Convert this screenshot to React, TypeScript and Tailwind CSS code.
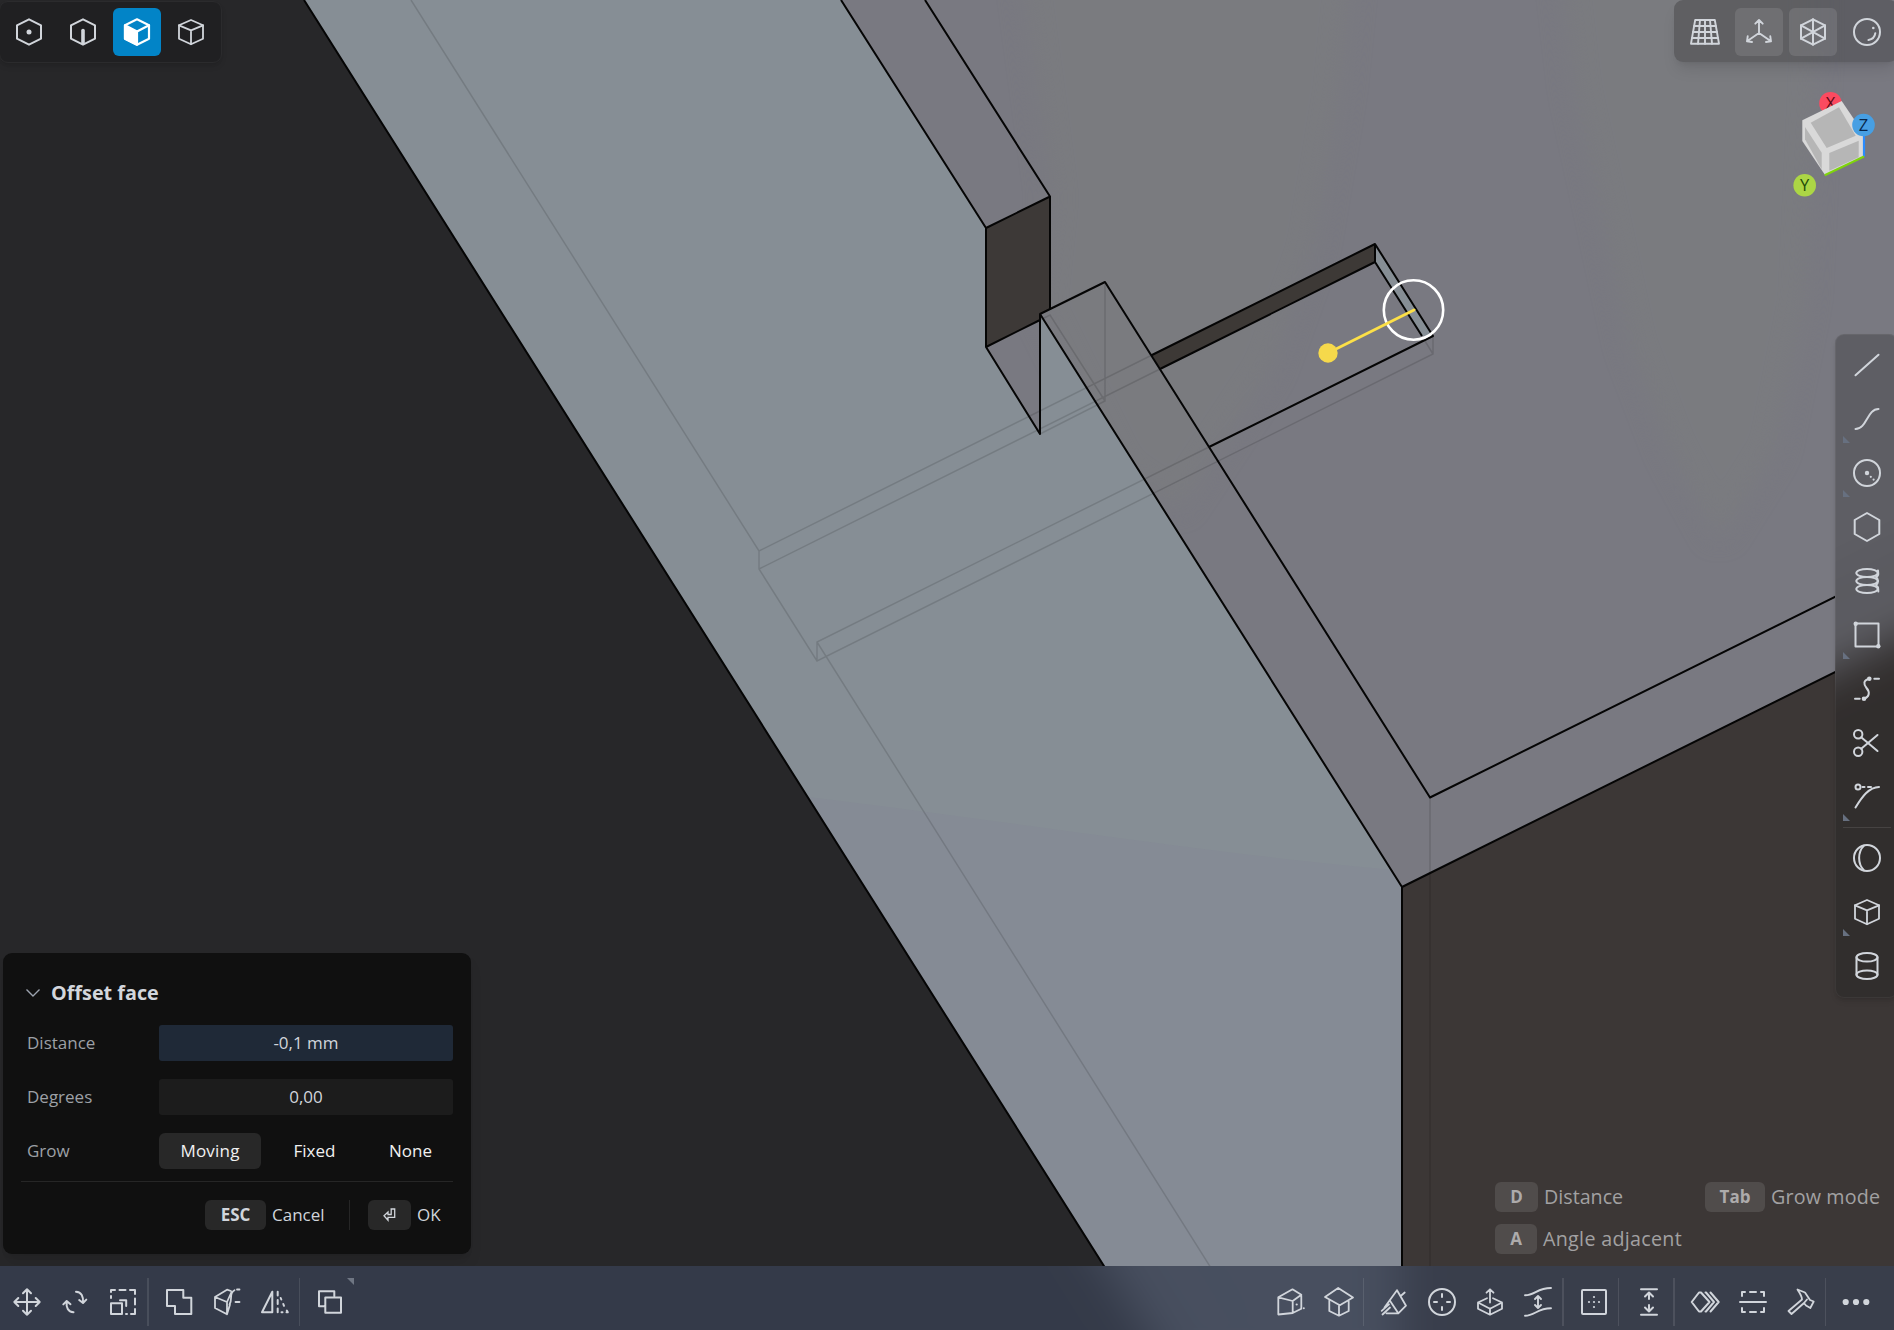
import React from "react";

type IconProps = { children: React.ReactNode; w?: number };

/* 32px glyph with its origin in the middle */
function Icon({ children, w = 2 }: IconProps) {
  return (
    <svg
      width="32"
      height="32"
      viewBox="-16 -16 32 32"
      fill="none"
      stroke="currentColor"
      strokeWidth={w}
      strokeLinecap="round"
      strokeLinejoin="round"
      className="shrink-0"
    >
      {children}
    </svg>
  );
}

const HEX = "M0 -12.7L12 -6.7V6.7L0 12.7L-12 6.7V-6.7Z";

const dot = (cx: number, cy: number, r: number) => (
  <circle key={`${cx},${cy}`} cx={cx} cy={cy} r={r} fill="currentColor" stroke="none" />
);

const icons = {
  point: (
    <Icon>
      <path d={HEX} />
      {dot(0, 0, 2.5)}
    </Icon>
  ),
  edge: (
    <Icon>
      <path d={HEX} />
      <path d="M0 -1.5V11" strokeWidth="3.6" />
    </Icon>
  ),
  face: (
    <Icon w={2.2}>
      <path d={HEX} />
      <path d="M-12 -6.7L0 -0.5V12.7L-12 6.7Z" fill="currentColor" />
      <path d="M0 -0.5L12 -6.7" />
    </Icon>
  ),
  solid: (
    <Icon w={1.8}>
      <path d="M0 -12L12 -6.7V6.7L0 12.3L-12 6.7V-6.7Z" />
      <path d="M-12 -6.7L0 -1.7L12 -6.7M0 -1.7V12" />
    </Icon>
  ),
  grid: (
    <Icon w={1.9}>
      <path d="M-9.8 -12H9.8L14 11.7H-14Z" />
      <path d="M-10.8 -6H10.8M-12 0H12M-13 6H13M-5 -12L-7 11.7M0 -12V11.7M5 -12L7 11.7" />
    </Icon>
  ),
  axes: (
    <Icon w={1.9}>
      <path d="M0 1V-12M-3.7 -8.3L0 -12L3.7 -8.3M0 1L-12 9.3M-11.3 4.3L-12 9.3L-7 10M0 1L12 9.3M11.3 4.3L12 9.3L7 10" />
    </Icon>
  ),
  wire: (
    <Icon>
      <path d={HEX} />
      <path d="M0 -12.7V12.7M-12 -6.7L12 6.7M12 -6.7L-12 6.7" />
    </Icon>
  ),
  shaded: (
    <Icon>
      <circle r="13" />
      <path d="M1.5 8C5 7.5 7.8 5 8.3 1.2" />
      {dot(6.3, -4, 1.3)}
    </Icon>
  ),
  line: (
    <Icon>
      <path d="M-11.5 10.3L11.5 -10.3" />
    </Icon>
  ),
  curve: (
    <Icon>
      <path d="M-11.5 10C0 10 0 -10 11.5 -10" />
    </Icon>
  ),
  circle: (
    <Icon>
      <circle r="13" />
      {dot(0, 0, 2.2)}
      {dot(3.8, 3.8, 1.1)}
      {dot(6.6, 6.6, 1.1)}
    </Icon>
  ),
  polygon: (
    <Icon>
      <path d="M0 -14L12.3 -7V7L0 14L-12.3 7V-7Z" />
    </Icon>
  ),
  spiral: (
    <Icon>
      <ellipse cy="-8" rx="10.7" ry="4" />
      <ellipse cy="0" rx="10.7" ry="4" />
      <ellipse cy="8" rx="10.7" ry="4" />
      <path d="M11 -10.5C11.5 -6 11.5 -5 9 -4C12 -2 11.5 2 9 4C12 6 11 8 11.3 10.5" />
    </Icon>
  ),
  rect: (
    <Icon>
      <path d="M-11.5 -11.5H11.5V11.5H-11.5Z" />
      {dot(-11.3, -11.3, 2.2)}
      {dot(11.3, 11.3, 2.2)}
    </Icon>
  ),
  spline: (
    <Icon>
      <path d="M2.3 -10.3C-4 -9 -3.5 -4.5 -0.5 -1C3.5 3.5 2 8.5 -3 9.7M7.3 -10.3H12M-12 9.7H-7.3" />
      {dot(2.3, -10.3, 2.3)}
      {dot(-3, 9.7, 2.3)}
    </Icon>
  ),
  trim: (
    <Icon>
      <circle cx="-8.8" cy="-8.8" r="4.2" />
      <circle cx="-8.8" cy="8.8" r="4.2" />
      <path d="M-5.8 -5.8L10.5 8M-5.8 5.8L10.5 -8" />
    </Icon>
  ),
  fillet: (
    <Icon>
      <circle cx="-9" cy="-10" r="2.5" />
      <path d="M-4.5 -10H-2.5M1 -10H4M-11.5 10.5C-5 0 2 -10 12 -10" />
    </Icon>
  ),
  sphere: (
    <Icon>
      <circle r="13" />
      <path d="M-3 -12.4C-9.5 -6 -9.5 6 -3 12.4" />
    </Icon>
  ),
  cylinder: (
    <Icon>
      <ellipse cy="-8.7" rx="10.5" ry="4.3" />
      <ellipse cy="8.7" rx="10.5" ry="4.3" />
      <path d="M-10.5 -8.7V8.7M10.5 -8.7V8.7" />
    </Icon>
  ),
  move: (
    <Icon>
      <path d="M0 -12.7V12.7M-12.7 0H12.7M-4 -8.7L0 -12.7L4 -8.7M-4 8.7L0 12.7L4 8.7M-8.7 -4L-12.7 0L-8.7 4M8.7 -4L12.7 0L8.7 4" />
    </Icon>
  ),
  rotate: (
    <Icon>
      <path d="M1 -10.3C6.5 -10 8.5 -5.5 8 0.7M4.2 -2L8 1L11.3 -2.4M-1.5 10.3C-7 10 -9 5.5 -8.3 -0.7M-11.7 2.4L-8.3 -1L-4.5 2.2" />
    </Icon>
  ),
  scale: (
    <Icon>
      <path d="M-12 1.3H-1V12H-12Z" />
      <path d="M-3 -1.8H3.2V4M-12 -4V-6M-12 -10V-12H-8M-3.5 -12H2.5M7 -12H12V-8M12 -3.5V2.5M12 7V12H8M3 12H4" />
    </Icon>
  ),
  union: (
    <Icon>
      <path d="M-12 -12H4.3V-4.3H12.3V12H-4V4H-12Z" />
    </Icon>
  ),
  cut: (
    <Icon w={1.8}>
      <path d="M-12 -5L0 0V12.3L-12 6Z M-12 -5L0 -12.3L4 -11M0 0L4.5 -10M0 12.3L3 2.5M7.5 -11.8C1.5 -9 6 -3 2.5 2.5M10 -12.5H12.5M8.5 0H12.5" />
    </Icon>
  ),
  mirror: (
    <Icon>
      <path d="M-2.7 -10.3V10.3H-13Z M2.7 -10.3V-6.5M2.7 -2V2M2.7 6.5V10.3M5.7 -4L6.3 -2.5M8.3 2L9 3.8M11.8 8.5L12.8 10.3H11.5M6.5 10.3H7.5" />
    </Icon>
  ),
  copy: (
    <Icon>
      <path d="M-4.7 -4.5H11V10.7H-4.7Z M-5.7 4.3H-11V-10.7H4.3V-6" />
    </Icon>
  ),
  shell: (
    <Icon w={1.8}>
      <path d="M-12.7 -4.7L1.5 -12.7L10.3 -7.3V6.7L1.7 11L-12.7 12.5Z M-12.7 -4.7L1.7 -1L10.3 -7.3M1.7 -1V11" />
      {dot(5.7, 2.5, 1.1)}
      {dot(12.8, 6.3, 1)}
    </Icon>
  ),
  loft: (
    <Icon w={1.8}>
      <path d="M-14 -5L-0.8 -14L14 -4.5L0.8 3.2Z M-9.7 -1.5V9L0 13.7L9.7 9V-0.5M0 4V13.7" />
    </Icon>
  ),
  chamfer: (
    <Icon w={1.8}>
      <path d="M3 -11.7L-9.5 5.5M3 -11.7L12 3.7L4.3 11.3H-7.5M-4.2 -1.5L4.3 11.3M7 -6.3L10.7 -9.5M-12.3 8.8L-5 2.3M-11.5 12.5L-4 5.5" />
    </Icon>
  ),
  crosshair: (
    <Icon>
      <circle r="13" />
      <path d="M0 -8V-5M0 5V8M-8 0H-5M5 0H8" />
    </Icon>
  ),
  extrude: (
    <Icon w={1.8}>
      <path d="M-3 -3.8L-12 0.5V6.7L0 12.7L12 6.7V0.5L3 -3.8M-12 0.5L0 6.7L12 0.5M0 6.7V12.7M0 0.5V-12.5M-3.5 -9.3L0 -12.7L3.5 -9.3" />
    </Icon>
  ),
  thicken: (
    <Icon w={1.9}>
      <path d="M-13 -6.7C-3 -6.7 -1 -14 13 -14M-13 13.7C-3 13.7 -1 6.3 13 6.3M0 -5.7V5.7M-3 -3L0 -6L3 -3M-3 3L0 6L3 3" />
    </Icon>
  ),
  pattern: (
    <Icon>
      <rect x="-12" y="-12" width="24" height="24" rx="1" />
      {[-5, 0, 5].map((v) => dot(v, 0, 1.1))}
      {[-5, 5].map((v) => dot(0, v, 1.1))}
    </Icon>
  ),
  height: (
    <Icon>
      <path d="M-8 -12.7H8M-8 12.7H8M0 -9.5V-3M-4 -5.5L0 -9.5L4 -5.5M0 9.5V3M-4 5.5L0 9.5L4 5.5" />
    </Icon>
  ),
  imprint: (
    <Icon>
      <path d="M-13.3 0L-6 -9.5H-4L4.5 0L-4 9.5H-6Z M0.5 -9.5H1L9 0L1 9.5H0.5M5.5 -9.5L13.7 0L5.5 9.5" />
    </Icon>
  ),
  section: (
    <Icon>
      <path d="M-13 0H13M-11 -6V-10H-8M-3 -10H3M8 -10H11V-6M-11 6V10H-8M-3 10H3M8 10H11V6" />
    </Icon>
  ),
  hammer: (
    <Icon w={1.8}>
      <path d="M-3.5 -12.5L4 -9.5L9 -2L12.7 -0.5L9.3 6L5 3.5L3 1L-9.5 12L-12.5 9L1 -2.5C1 -6 -1.5 -9 -3.5 -12.5ZM3 1L6 -2.5" />
    </Icon>
  ),
  more: (
    <Icon>
      {dot(-10.3, 0, 3.1)}
      {dot(0, 0, 3.1)}
      {dot(10.3, 0, 3.1)}
    </Icon>
  ),
};

type Name = keyof typeof icons;

/* Black model edges */
const EDGES =
  "M304 0L1176 1380M841 0L986 228L1050 196.500L925 0M986 228V347L1040 434V314L1402 887V1380" +
  "M1050 196.500V310M986 347L1040 320M1040 314L1105 282L1430 797.500L1960 535M1402 887L1960 610" +
  "M1152 355L1375 244L1433 336L1209 447M1375 244V262L1422 336M1375 262L1160 369";

/* Occluded model edges */
const HIDDEN =
  "M411 0L759 551L1152 355M759 551V569L817 661L1433 354V336M759 569L1160 369M817 661V642L1209 447" +
  "M817 642L1250 1330M1105 282V401L1040 434M1105 401L1050 315L1040 320M1430 797V1330M1425 341L1433 354";

function Scene() {
  return (
    <svg className="absolute inset-0" width="1894" height="1330" viewBox="0 0 1894 1330">
      <defs>
        <clipPath id="top">
          <path d="M841 0H1960V610L1402 887L1040 314L1040 434L986 347V228Z" />
        </clipPath>
        <clipPath id="front">
          <path d="M304 0H841L986 228V347L1040 434V314L1402 887V1380H1176Z" />
        </clipPath>
        <clipPath id="panes">
          <rect x="0" y="1266" width="1894" height="64" />
          <rect x="1835" y="334" width="80" height="664" rx="9" />
        </clipPath>
        <filter
          id="soft"
          x="-10%"
          y="-10%"
          width="120%"
          height="120%"
          colorInterpolationFilters="sRGB"
        >
          <feGaussianBlur stdDeviation="12" />
        </filter>
        <filter
          id="frost"
          filterUnits="userSpaceOnUse"
          x="-60"
          y="200"
          width="2020"
          height="1180"
          colorInterpolationFilters="sRGB"
        >
          <feGaussianBlur stdDeviation="22" />
        </filter>
      </defs>
      <g id="model">
        <rect x="-60" y="-60" width="2020" height="1440" fill="#272729" />
        <g clipPath="url(#top)">
          <rect x="800" y="-60" width="1160" height="1000" fill="#797981" />
          <g fill="#7a7b7f" filter="url(#soft)">
            <path d="M1020 -40H1353L1340 90L1313 250L1270 370L1178 510L1120 470L1040 310L1052 197Z" />
            <path d="M1560 -40L1575 90L1603 218L1630 345L1670 450L1719 540L1775 450L1805 300L1816 60V-40Z" />
          </g>
        </g>
        <g clipPath="url(#front)">
          <rect y="-60" width="1500" height="1440" fill="#868e95" />
          <path d="M700 785C950 810 1200 855 1420 872V1380H700Z" fill="#858b95" />
        </g>
        <path d="M1402 887L1960 610V1380H1402Z" fill="#3c3736" />
        <path d="M986 228L1050 196.500V309L1040 314V320L986 347Z" fill="#3d3937" />
        <path d="M1152 355L1375 244V262L1160 369Z" fill="#3d3936" />
        <path d="M1375 244L1433 336L1422 336L1375 262Z" fill="#868e95" />
        <path d={HIDDEN} fill="none" stroke="#000" strokeOpacity=".13" strokeWidth="1.5" />
        <path d={EDGES} fill="none" stroke="#050505" strokeWidth="2" strokeLinejoin="round" />
      </g>
      {/* frosted copy of the model behind the side and bottom bars */}
      <g clipPath="url(#panes)">
        <use href="#model" filter="url(#frost)" />
      </g>
      <circle cx="1413.500" cy="310" r="29.700" fill="none" stroke="#fff" strokeWidth="2.600" />
      <path d="M1328 353L1414 310" stroke="#fde047" strokeWidth="2.800" strokeLinecap="round" />
      <circle cx="1328" cy="353" r="9.700" fill="#f6d94b" />
    </svg>
  );
}

function ViewCube() {
  return (
    <svg
      width="94"
      height="112"
      viewBox="1790 88 94 112"
      className="font-['Open_Sans',sans-serif] text-[16.5px]"
      textAnchor="middle"
    >
      <circle cx="1830.500" cy="103.300" r="11.300" fill="#fb4a60" />
      <text x="1830.500" y="109" fill="#5a0712">X</text>
      <path d="M1802.300 120.300L1841.700 101L1864 134V156.700L1825 175L1802.300 141Z" fill="#d9d9d9" />
      <path d="M1810.700 122.700L1839 107.300L1855.700 135.700L1826.700 148Z" fill="#b6b6b6" />
      <path d="M1829.300 153L1858.700 140.700V157.300L1829.300 170.700Z" fill="#b6b6b6" />
      <path d="M1805 127L1821.700 152.700V169.300L1805 139.300Z" fill="#b6b6b6" />
      <path d="M1864 134V156.500" stroke="#2a8cff" strokeWidth="2.200" />
      <path d="M1824.700 175.200L1864 156.500" stroke="#7fd40c" strokeWidth="2.200" />
      <circle cx="1863.500" cy="125" r="11.300" fill="#479fe3" />
      <text x="1863.500" y="131" fill="#07264a">Z</text>
      <circle cx="1804.700" cy="185.300" r="11.300" fill="#acd645" />
      <text x="1804.700" y="191.300" fill="#1f4a07">Y</text>
    </svg>
  );
}

function Tool({ name, active = "", corner = false }: { name: Name; active?: string; corner?: boolean }) {
  return (
    <button className={`relative flex size-12 shrink-0 items-center justify-center rounded-md ${active}`}>
      {icons[name]}
      {corner && (
        <span className="absolute bottom-0 left-0 size-[7px] bg-[#677080] [clip-path:polygon(0_0,100%_100%,0_100%)]" />
      )}
    </button>
  );
}

function BarTool({ name, corner = false }: { name: Name; corner?: boolean }) {
  return (
    <button className="relative flex size-12 shrink-0 items-center justify-center">
      {icons[name]}
      {corner && (
        <span className="absolute top-0 right-0 size-[7px] bg-[#6f7683] [clip-path:polygon(0_0,100%_0,100%_100%)]" />
      )}
    </button>
  );
}

const BarDivider = () => <span className="mr-[6px] h-12 w-[1.5px] shrink-0 bg-white/10" />;

function Key({ children, className }: { children: React.ReactNode; className: string }) {
  return (
    <span className={`flex h-[30px] shrink-0 items-center justify-center rounded-md font-bold ${className}`}>
      {children}
    </span>
  );
}

const label = "w-[138px] shrink-0 pl-[6px] text-[#9da0a6]";

function OffsetDialog() {
  return (
    <section className="ml-[3px] flex h-[301px] w-[468px] flex-col rounded-[9px] bg-[#101010] pt-[22px] pr-[18px] pl-[18px] text-[17px] shadow-lg">
      <header className="flex h-9 items-center gap-[11px] pl-[5px]">
        <svg width="14" height="8" viewBox="0 0 14 8" fill="none" stroke="#9ca3af" strokeWidth="1.400">
          <path d="M0.500 0.500L7 7L13.500 0.500" />
        </svg>
        <h2 className="text-[19.8px] font-bold text-[#d3d6dc]">Offset face</h2>
      </header>
      <div className="mt-[14px] flex flex-col gap-[18px]">
        <div className="flex h-9 items-center">
          <span className={label}>Distance</span>
          <span className="flex h-9 flex-1 items-center justify-center rounded-[3px] bg-[#1f2937] text-[#d1d5db]">
            -0,1 mm
          </span>
        </div>
        <div className="flex h-9 items-center">
          <span className={label}>Degrees</span>
          <span className="flex h-9 flex-1 items-center justify-center rounded-[3px] bg-[#1c1c1c] text-[#d1d5db]">
            0,00
          </span>
        </div>
        <div className="flex h-9 items-center text-[#f1f1f1]">
          <span className={label}>Grow</span>
          <span className="flex h-9 w-[102px] shrink-0 items-center justify-center rounded-md bg-[#282828] tracking-[0.2px]">
            Moving
          </span>
          <span className="ml-[12px] flex h-9 w-[83px] shrink-0 items-center justify-center">Fixed</span>
          <span className="ml-[12px] flex h-9 w-[85px] shrink-0 items-center justify-center">None</span>
        </div>
      </div>
      <div className="mt-[12px] h-px bg-[#262626]" />
      <div className="mt-[18px] flex h-[30px] items-center text-[#d1d5db]">
        <Key className="ml-[184px] w-[61px] bg-[#282828] text-[17px]">ESC</Key>
        <span className="w-[83px] shrink-0 pl-[6px]">Cancel</span>
        <span className="h-[30px] w-px shrink-0 bg-[#262626]" />
        <Key className="ml-[18px] w-[43px] bg-[#282828]">
          <svg width="13" height="14" viewBox="0 0 13 14" fill="none" stroke="#d1d5db" strokeWidth="1.300">
            <path d="M7.500 1H11.700V9.300H5V12.300L1 7.800L5 4V6.500H8.200V1" />
          </svg>
        </Key>
        <span className="pl-[6px]">OK</span>
      </div>
    </section>
  );
}

function Hints() {
  const key = "bg-[#504c4b] text-[17px] text-[#adabab]";
  return (
    <div className="mr-[14px] flex flex-col gap-[12px] text-[19.7px] text-[#a2a1a2]">
      <div className="flex h-[30px] items-center">
        <Key className={`w-[43px] ${key}`}>D</Key>
        <span className="w-[167px] pl-[6px]">Distance</span>
        <Key className={`w-[60px] ${key}`}>Tab</Key>
        <span className="w-[115px] pl-[6px] tracking-[0.15px] whitespace-nowrap">Grow mode</span>
      </div>
      <div className="flex h-[30px] items-center">
        <Key className={`w-[42px] ${key}`}>A</Key>
        <span className="pl-[6px] tracking-[0.3px]">Angle adjacent</span>
      </div>
    </div>
  );
}

export default function App() {
  return (
    <main className="relative h-[1330px] w-[1894px] overflow-hidden font-['Open_Sans',sans-serif] text-[#d1d5db]">
      <Scene />
      <div className="relative flex h-full flex-col">
        <div className="flex h-[63px] justify-between">
          <nav className="-ml-px mt-px flex h-[62px] w-[223px] gap-[6px] rounded-[9px] border border-[#2b2b2d] bg-[#202022] pt-[6px] pl-[5px] shadow-md">
            <Tool name="point" />
            <Tool name="edge" />
            <Tool name="face" active="bg-[#0284c7] text-white" />
            <Tool name="solid" />
          </nav>
          <nav className="-mr-1 flex h-[62px] gap-[6px] rounded-[9px] bg-[#171717]/27 px-[7px] pt-2 shadow-lg">
            <Tool name="grid" />
            <Tool name="axes" active="bg-white/10" />
            <Tool name="wire" active="bg-white/10" />
            <Tool name="shaded" />
          </nav>
        </div>

        <div className="flex min-h-0 flex-1 items-end justify-between pb-3">
          <OffsetDialog />
          <div className="flex h-full flex-col items-end justify-between">
            <div className="mt-[25px] mr-[10px] h-[112px]">
              <ViewCube />
            </div>
            <nav className="-mr-1 mb-[50px] flex w-[63px] flex-col gap-[6px] rounded-[9px] border border-white/5 bg-[#171717]/27 pt-[6px] pb-[7px] pl-[7px] shadow-md">
              <Tool name="line" />
              <Tool name="curve" corner />
              <Tool name="circle" corner />
              <Tool name="polygon" />
              <Tool name="spiral" />
              <Tool name="rect" corner />
              <Tool name="spline" />
              <Tool name="trim" />
              <Tool name="fillet" corner />
              <span className="h-px w-12 shrink-0 bg-white/10" />
              <Tool name="sphere" />
              <Tool name="solid" corner />
              <Tool name="cylinder" />
            </nav>
            <Hints />
          </div>
        </div>

        <footer className="flex h-16 shrink-0 items-center justify-between bg-[#384051]/80 pr-[14px] pl-[3px]">
          <div className="flex pt-[8px]">
            <BarTool name="move" />
            <BarTool name="rotate" />
            <BarTool name="scale" />
            <BarDivider />
            <BarTool name="union" />
            <BarTool name="cut" />
            <BarTool name="mirror" />
            <BarDivider />
            <BarTool name="copy" corner />
          </div>
          <div className="flex pt-[8px]">
            <BarTool name="shell" />
            <BarTool name="loft" />
            <BarDivider />
            <BarTool name="chamfer" />
            <BarTool name="crosshair" />
            <BarTool name="extrude" />
            <BarTool name="thicken" />
            <BarDivider />
            <BarTool name="pattern" />
            <BarDivider />
            <BarTool name="height" />
            <BarDivider />
            <BarTool name="imprint" />
            <BarTool name="section" />
            <BarTool name="hammer" />
            <BarDivider />
            <BarTool name="more" />
          </div>
        </footer>
      </div>
    </main>
  );
}
